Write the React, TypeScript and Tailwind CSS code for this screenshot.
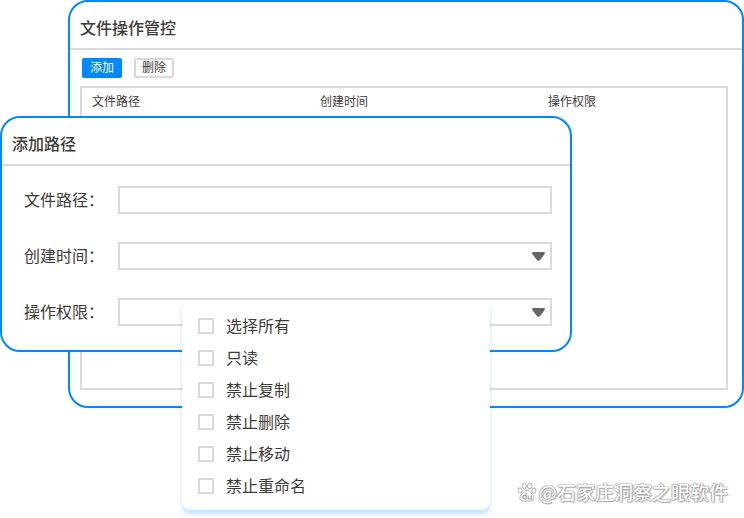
import React from 'react';

const columns = ['文件路径', '创建时间', '操作权限'];

const permissions = ['选择所有', '只读', '禁止复制', '禁止删除', '禁止移动', '禁止重命名'];

const Caret: React.FC = () => (
  <svg
    viewBox="0 0 14 10"
    className="pointer-events-none absolute top-1/2 right-1.5 h-2.5 w-3.5 -translate-y-1/2"
    fill="#666666"
    aria-hidden="true"
  >
    <path d="M1.500 1h10C12.900 1 13.300 2.300 12.500 3.300 11.100 5.400 9.500 7.400 7.800 9.200 7 10 6 10 5.200 9.200 3.500 7.400 1.900 5.400 .5 3.300-.2 2.200 .3 1 1.500 1z" />
  </svg>
);

interface PanelHeaderProps {
  title: string;
}

const PanelHeader: React.FC<PanelHeaderProps> = ({ title }) => (
  <header className="border-b-2 border-[#d9d9d9] px-2.5 pt-[13px] pb-[9px]">
    <h2 className="text-base leading-6 font-medium">{title}</h2>
  </header>
);

const ControlPanel: React.FC = () => (
  <section className="ml-[68px] rounded-[20px] border-2 border-[#0088ff] bg-white">
    <PanelHeader title="文件操作管控" />
    <div className="pt-2 pr-3.5 pb-4 pl-2.5">
      <div className="flex gap-3 px-0.5 text-xs">
        <button
          type="button"
          className="flex h-5 w-10 items-center justify-center rounded-xs bg-[#0088ff] pb-0.5 text-white"
        >
          添加
        </button>
        <button
          type="button"
          className="flex h-5 w-10 items-center justify-center rounded-xs border-2 border-[#d9d9d9] bg-white pb-0.5"
        >
          删除
        </button>
      </div>
      <div className="mt-2 min-h-[304px] border-2 border-[#d9d9d9]">
        <table className="w-full table-fixed text-xs">
          <thead>
            <tr>
              {columns.map((column) => (
                <th
                  key={column}
                  scope="col"
                  className="h-[26px] w-[228px] px-2.5 text-left font-normal last:w-auto"
                >
                  {column}
                </th>
              ))}
            </tr>
          </thead>
        </table>
      </div>
    </div>
  </section>
);

const PermissionMenu: React.FC = () => (
  <ul className="absolute top-1 right-[62px] left-16 rounded-lg bg-white py-2 shadow-[0_4px_4px_rgba(0,136,255,0.25)]">
    {permissions.map((permission) => (
      <li key={permission}>
        <label className="flex h-8 items-center gap-3 px-4">
          <input
            type="checkbox"
            className="size-4 appearance-none border-2 border-[#d9d9d9] bg-white checked:bg-[#0088ff]"
          />
          <span className="pb-0.5">{permission}</span>
        </label>
      </li>
    ))}
  </ul>
);

const AddPathDialog: React.FC = () => (
  <section className="absolute top-[116px] right-[172px] left-0 rounded-[20px] border-2 border-[#0088ff] bg-white">
    <PanelHeader title="添加路径" />
    <form className="flex flex-col gap-7 pt-5 pr-[18px] pb-6 pl-[22px]">
      <div className="flex h-7 items-center">
        <label htmlFor="path" className="w-[94px] shrink-0 pb-0.5">
          文件路径：
        </label>
        <input id="path" type="text" className="h-full w-full border-2 border-[#d9d9d9] px-2 text-sm" />
      </div>
      <div className="flex h-7 items-center">
        <label htmlFor="created" className="w-[94px] shrink-0 pb-0.5">
          创建时间：
        </label>
        <div className="relative h-full w-full">
          <select
            id="created"
            className="block h-full w-full appearance-none border-2 border-[#d9d9d9] bg-white px-2 text-sm"
          />
          <Caret />
        </div>
      </div>
      <div className="flex h-7 items-center">
        <label htmlFor="permission" className="w-[94px] shrink-0 pb-0.5">
          操作权限：
        </label>
        <div className="relative h-full w-full">
          <select
            id="permission"
            className="block h-full w-full appearance-none border-2 border-[#d9d9d9] bg-white px-2 text-sm"
          />
          <Caret />
          <PermissionMenu />
        </div>
      </div>
    </form>
  </section>
);

const Watermark: React.FC = () => (
  <div className="absolute right-4 bottom-3 flex items-center gap-0.5 text-[19px] leading-7 font-medium text-white">
    <svg viewBox="0 0 20 20" className="size-5" aria-hidden="true">
      <g fill="#ffffff" stroke="#b4b4b4" strokeWidth="1">
        <ellipse cx="3.1" cy="8.6" rx="2" ry="2.6" transform="rotate(-12 3.1 8.6)" />
        <ellipse cx="7.3" cy="4" rx="2.1" ry="2.8" />
        <ellipse cx="12.7" cy="4" rx="2.1" ry="2.8" transform="rotate(8 12.7 4)" />
        <ellipse cx="16.9" cy="8.6" rx="2" ry="2.6" transform="rotate(12 16.9 8.6)" />
        <path d="M10 8.2c-2 0-2.7 1.4-3.8 2.8-1.3 1.5-3.3 2.4-3.3 4.8 0 2 1.5 3.4 3.5 3.4 1.3 0 2.3-.3 3.6-.3s2.3.3 3.6.3c2 0 3.5-1.4 3.5-3.4 0-2.4-2-3.3-3.3-4.8C12.700 9.600 12 8.200 10 8.200z" />
      </g>
      {/* marks inside the paw */}
      <g fill="none" stroke="#a0a0a0" strokeWidth="1.2">
        <path d="M9 11.300v5.700M9 13.700H7.300c-1 0-1.600.7-1.600 1.650S6.300 17 7.300 17H9" />
        <path d="M11.100 13.400v2.300c0 .9.500 1.300 1.300 1.300h1.900v-3.600" />
      </g>
    </svg>
    <span className="[text-shadow:0_0_1px_#888,0_0_1px_#888,0_0_2px_#999,1px_1px_1px_#bbb]">
      @石家庄洞察之眼软件
    </span>
  </div>
);

const App: React.FC = () => {
  return (
    <main className="relative min-h-screen bg-white font-['Noto_Sans_CJK_SC',sans-serif] text-base text-[#403a39]">
      <ControlPanel />
      <AddPathDialog />
      <Watermark />
    </main>
  );
};

export default App;
